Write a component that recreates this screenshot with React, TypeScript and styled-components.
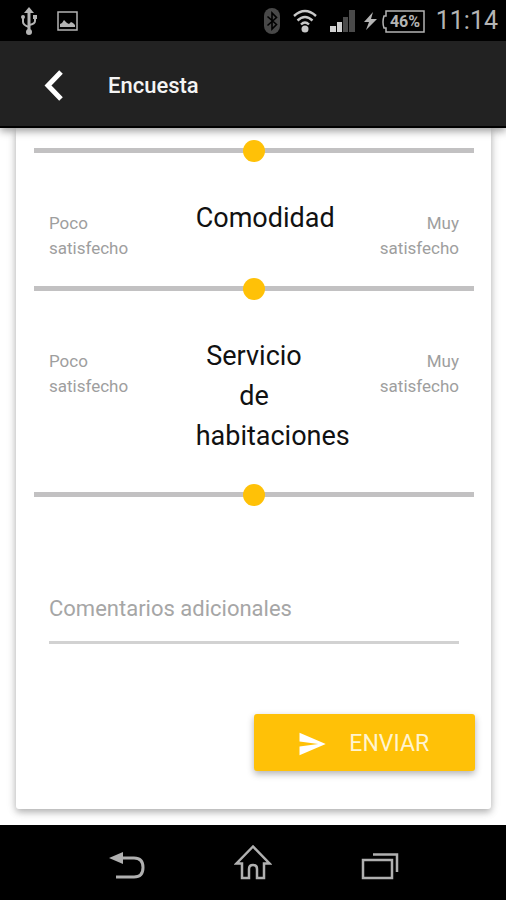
import React, { useState } from "react";
import styled, { createGlobalStyle } from "styled-components";
import { MdSend } from "react-icons/md";

const GlobalStyle = createGlobalStyle`
  *, *::before, *::after { box-sizing: border-box; }
  body { margin: 0; background: #fff; font-family: Roboto, "Liberation Sans", sans-serif; }
`;

const Screen = styled.div`
  display: flex;
  flex-direction: column;
  min-height: 100vh;
`;

const StatusBar = styled.div`
  display: flex;
  align-items: center;
  justify-content: space-between;
  height: 41px;
  padding: 1px 8px 0 20px;
  background: #000;
  color: #b4b4b4;
`;

const StatusGroup = styled.div<{ $gap: number }>`
  display: flex;
  align-items: center;
  gap: ${(p) => p.$gap}px;
`;

const Power = styled.div`
  display: flex;
  align-items: center;
  gap: 4px;
`;

const Clock = styled.time`
  margin-left: 2px;
  font-size: 25px;
  line-height: 40px;
`;

const AppBar = styled.header`
  display: flex;
  align-items: center;
  gap: 33px;
  height: 87px;
  padding: 4px 32px 0;
  background: #222;
  border-bottom: 2px solid #000;
  box-shadow: 0 3px 8px rgba(0, 0, 0, 0.4);
  z-index: 1;
`;

const BackButton = styled.button`
  display: grid;
  place-items: center;
  width: 43px;
  height: 48px;
  padding: 0;
  border: 0;
  background: none;
  color: #fff;
`;

const Title = styled.h1`
  margin: 0;
  color: #f4f4f4;
  font-size: 22px;
  font-weight: 500;
  line-height: 32px;
`;

const Content = styled.main`
  flex: 1;
  padding: 0 15px 16px 16px;
`;

const Card = styled.form`
  padding: 11px 0 38px;
  background: #fff;
  border-radius: 0 0 3px 3px;
  box-shadow: 0 3px 7px rgba(0, 0, 0, 0.26), 0 2px 12px rgba(0, 0, 0, 0.1);
`;

const Question = styled.section`
  padding: 0 17px 0 18px;
`;

const QuestionHead = styled.div`
  display: grid;
  grid-template-columns: repeat(3, minmax(0, 1fr));
  padding-top: 37px;
`;

const Hint = styled.span<{ $align: "left" | "right" }>`
  padding: ${(p) => (p.$align === "left" ? "13px 32px 16px 15px" : "13px 15px 16px 32px")};
  color: #9e9e9e;
  font-size: 17px;
  line-height: 25px;
  text-align: ${(p) => p.$align};
`;

const QuestionLabel = styled.label`
  padding: 0 15px 27px;
  color: #111;
  font-size: 27px;
  line-height: 40px;
  text-align: center;
`;

const Slider = styled.input`
  display: block;
  appearance: none;
  width: 100%;
  height: 22px;
  margin: 0;
  background: none;

  &::-webkit-slider-runnable-track {
    height: 5px;
    background: #c2c1c2;
  }
  &::-webkit-slider-thumb {
    appearance: none;
    width: 22px;
    height: 22px;
    margin-top: -8px;
    border: 0;
    border-radius: 50%;
    background: #ffc107;
  }
`;

const Comments = styled.input`
  display: block;
  width: calc(100% - 65px);
  height: 69px;
  margin: 70px 32px 70px 33px;
  padding: 0;
  border: 0;
  border-bottom: 3px solid #d2d2d2;
  border-radius: 0;
  outline: 0;
  background: none;
  color: #222;
  font: 22px Roboto, "Liberation Sans", sans-serif;

  &::placeholder { color: #a6a6a6; opacity: 1; }
`;

const Actions = styled.div`
  display: flex;
  justify-content: flex-end;
  padding: 0 16px;
`;

const SendButton = styled.button`
  display: flex;
  align-items: center;
  justify-content: center;
  gap: 22px;
  width: 50%;
  height: 57px;
  padding: 2px 2px 0 0;
  border: 0;
  border-radius: 3px;
  background: #ffc107;
  box-shadow: 0 3px 7px rgba(0, 0, 0, 0.3);
  color: #fff;
  font: 23px Roboto, "Liberation Sans", sans-serif;
`;

const SendLabel = styled.span`
  color: #fff4d0;
`;

const SystemNav = styled.nav`
  display: flex;
  justify-content: center;
  height: 75px;
  background: #000;
  z-index: 1;
`;

const NavButton = styled.button`
  display: flex;
  align-items: flex-end;
  justify-content: center;
  width: 25%;
  padding: 0 0 20px;
  border: 0;
  background: none;
  color: #b0b0b0;
`;

const UsbIcon = () => (
  <svg width="18" height="28" viewBox="0 0 18 28" fill="none" stroke="currentColor" strokeWidth="2" aria-hidden="true">
    <path d="M9 5v20" strokeWidth="3" />
    <path d="M9 0l5 6H4z" fill="currentColor" stroke="none" />
    <circle cx="9" cy="25" r="3" fill="currentColor" stroke="none" />
    <path d="M3 10v5q0 3 6 5M15 10v4q0 3-6 4" />
    <circle cx="3" cy="10" r="2" fill="currentColor" stroke="none" />
    <path d="M13 8h4v4h-4z" fill="currentColor" stroke="none" />
  </svg>
);

const PictureIcon = () => (
  <svg width="21" height="20" viewBox="0 0 21 20" aria-hidden="true">
    <path d="M1 1h19v18H1z" fill="none" stroke="currentColor" strokeWidth="1.5" />
    <path d="M3 16v-3l2-1 2-3 3 3 2 1 2-2 2 1 2 2v2z" fill="currentColor" />
  </svg>
);

const BluetoothIcon = () => (
  <svg width="16" height="26" viewBox="0 0 16 26" aria-hidden="true">
    <rect width="16" height="26" rx="8" fill="#484848" />
    <path d="M3.500 8.500l9 8-4.500 4.500V5l4.500 4.500-9 8" fill="none" stroke="#000" strokeWidth="1.600" />
  </svg>
);

const WifiIcon = () => (
  <svg width="24" height="24" viewBox="0 0 24 24" fill="none" stroke="#c8c8c8" strokeWidth="2.400" aria-hidden="true">
    <path d="M1 7q11-10 22 0M4.500 11.500q7.500-7 15 0M8 15.500q4-4 8 0" />
    <circle cx="12" cy="20" r="3.500" fill="#c8c8c8" stroke="none" />
  </svg>
);

const SignalIcon = () => (
  <svg width="25" height="22" viewBox="0 0 25 22" aria-hidden="true">
    <path d="M0 16h6v6H0zM7 12h5v10H7z" fill="#d0d0d0" />
    <path d="M13 7h5v15h-5zM19 0h6v22h-6z" fill="#4a4a4a" />
  </svg>
);

const BoltIcon = () => (
  <svg width="13" height="18" viewBox="0 0 13 18" fill="currentColor" aria-hidden="true">
    <path d="M9 0L0 10h5L2 18l11-11H7z" />
  </svg>
);

const BatteryIcon = () => (
  <svg width="44" height="23" viewBox="0 0 44 23" role="img" aria-label="46%">
    <path d="M5 1h38v21H5v-4H3q-2-6 0-12h2z" fill="none" stroke="currentColor" strokeWidth="1.500" />
    <text x="24" y="17" textAnchor="middle" fill="currentColor" fontFamily="Roboto" fontSize="16" fontWeight="700">46%</text>
  </svg>
);

const ChevronIcon = () => (
  <svg width="20" height="31" viewBox="0 0 20 31" fill="none" stroke="currentColor" strokeWidth="5" aria-hidden="true">
    <path d="M17 2L4 15.500 17 29" />
  </svg>
);

const BackIcon = () => (
  <svg width="36" height="28" viewBox="0 0 36 28" fill="none" stroke="currentColor" strokeWidth="3" aria-hidden="true">
    <path d="M12 6h13q9 0 9 9.500t-9 9.500H7" />
    <path d="M0 6L14 0v12z" fill="currentColor" stroke="none" />
  </svg>
);

const HomeIcon = () => (
  <svg width="38" height="36" viewBox="0 0 38 36" fill="none" stroke="currentColor" strokeWidth="2.500" aria-hidden="true">
    <path d="M19 2.500L2.500 19.500H8V34h7v-9q0-4 4-4t4 4v9h7V19.500h5.500z" />
  </svg>
);

const RecentIcon = () => (
  <svg width="38" height="28" viewBox="0 0 38 28" fill="none" stroke="currentColor" strokeWidth="2.500" aria-hidden="true">
    <path d="M2 8h29v18H2zM12 2.500h24V20" />
  </svg>
);

type QuestionProps = { id: string; label: string };

const SatisfactionQuestion = ({ id, label }: QuestionProps) => {
  const [value, setValue] = useState(50);
  return (
    <Question>
      <QuestionHead>
        <Hint $align="left">Poco satisfecho</Hint>
        <QuestionLabel htmlFor={id}>{label}</QuestionLabel>
        <Hint $align="right">Muy satisfecho</Hint>
      </QuestionHead>
      <Slider id={id} type="range" value={value} onChange={(e) => setValue(Number(e.target.value))} />
    </Question>
  );
};

export default function App() {
  const [first, setFirst] = useState(50);
  return (
    <Screen>
      <GlobalStyle />
      <StatusBar>
        <StatusGroup $gap={19}>
          <UsbIcon />
          <PictureIcon />
        </StatusGroup>
        <StatusGroup $gap={9}>
          <StatusGroup $gap={13}>
            <BluetoothIcon />
            <WifiIcon />
            <SignalIcon />
          </StatusGroup>
          <Power>
            <BoltIcon />
            <BatteryIcon />
          </Power>
          <Clock>11:14</Clock>
        </StatusGroup>
      </StatusBar>
      <AppBar>
        <BackButton type="button" aria-label="Atrás"><ChevronIcon /></BackButton>
        <Title>Encuesta</Title>
      </AppBar>
      <Content>
        <Card onSubmit={(e) => e.preventDefault()}>
          <Question>
            <Slider type="range" aria-label="Satisfacción" value={first} onChange={(e) => setFirst(Number(e.target.value))} />
          </Question>
          <SatisfactionQuestion id="comodidad" label="Comodidad" />
          <SatisfactionQuestion id="servicio" label="Servicio de habitaciones" />
          <Comments type="text" aria-label="Comentarios adicionales" placeholder="Comentarios adicionales" />
          <Actions>
            <SendButton type="submit"><MdSend size={30} /><SendLabel>ENVIAR</SendLabel></SendButton>
          </Actions>
        </Card>
      </Content>
      <SystemNav>
        <NavButton type="button" aria-label="Volver"><BackIcon /></NavButton>
        <NavButton type="button" aria-label="Inicio"><HomeIcon /></NavButton>
        <NavButton type="button" aria-label="Recientes"><RecentIcon /></NavButton>
      </SystemNav>
    </Screen>
  );
}
